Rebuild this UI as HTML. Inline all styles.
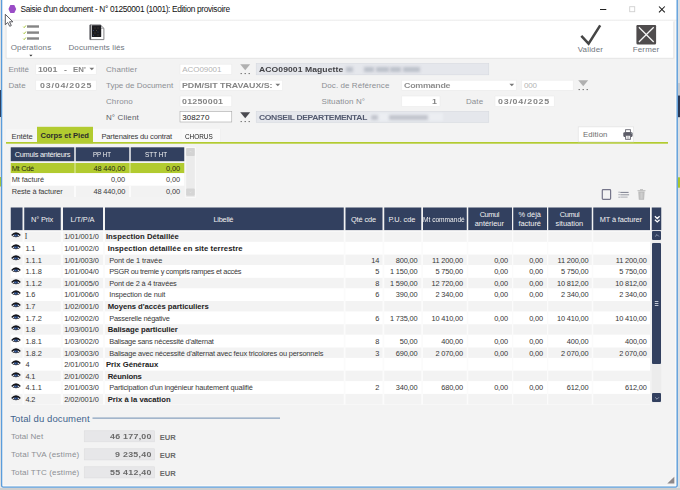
<!DOCTYPE html>
<html><head><meta charset="utf-8"><title>Saisie d'un document</title>
<style>
*{margin:0;padding:0;box-sizing:border-box}
html,body{width:680px;height:490px;overflow:hidden;background:#f3f3f3;font-family:"Liberation Sans",sans-serif}
.a{position:absolute}
.t{position:absolute;white-space:pre;line-height:12px;height:12px}
</style></head><body>
<div class="a" style="left:0px;top:0px;width:680px;height:20px;background:#fff;"></div>
<div class="a" style="left:0px;top:19px;width:680px;height:3px;background:linear-gradient(#fff,#efefef 45%,#f3f3f3);"></div>
<svg class="a" style="left:4px;top:19px" width="673" height="42"><rect x="2.100" y="1.900" width="667.700" height="37.400" fill="#fff"/><path d="M2.100 2.500 V39.300 H669.800 V2.500" fill="none" stroke="#e0e0e0" stroke-width="0.800"/></svg>
<svg class="a" style="left:8px;top:4px" width="9" height="10" viewBox="0 0 9 10"><path d="M2.300 0.900 H6.300 L8.200 4.900 L6.300 8.900 H2.300 L0.500 4.900 Z" fill="#9a4cc6"/></svg>
<svg class="a" style="left:596px;top:3px" width="72" height="12" viewBox="0 0 72 12"><path d="M4 6.500 H10.300" stroke="#222" stroke-width="1"/><rect x="33.700" y="3.700" width="5" height="5" fill="none" stroke="#cfcfcf" stroke-width="0.900"/><path d="M63 3.500 L68.800 9.300 M68.800 3.500 L63 9.300" stroke="#1a1a1a" stroke-width="1.050"/></svg>
<svg class="a" style="left:22px;top:24px" width="19" height="17" viewBox="0 0 19 17"><g fill="#858585"><rect x="5" y="1.300" width="12" height="2.400"/><rect x="5" y="7.400" width="12" height="2.400"/><rect x="5" y="13.300" width="12" height="2.400"/></g><g stroke="#9cbf1e" stroke-width="0.900" fill="none"><path d="M1.300 2.700 L2.200 3.600 L3.900 1.500"/><path d="M1.300 8.800 L2.200 9.700 L3.900 7.600"/><path d="M1.300 14.700 L2.200 15.600 L3.900 13.500"/></g></svg>
<svg class="a" style="left:29px;top:54px" width="4" height="3" viewBox="0 0 4 3"><path d="M0.300 0.800 H3.500 L1.900 2.500 Z" fill="#333"/></svg>
<svg class="a" style="left:88px;top:23px" width="18" height="18" viewBox="0 0 18 18"><path d="M2 1.900 H12.300 L15.900 5.300 V16.600 H2 Z" fill="#fff" stroke="#77777b" stroke-width="0.900"/><path d="M2.400 1.900 V16.600" stroke="#5a5a5e" stroke-width="1.500"/><path d="M12.300 1.900 V5.300 H15.900" fill="none" stroke="#8a8a8e" stroke-width="0.700"/><rect x="3.800" y="2.300" width="9.400" height="11.800" rx="0.500" fill="#1b1b1f"/><g fill="#8a7a5a"><circle cx="7" cy="5" r=".45"/><circle cx="10" cy="5" r=".45"/><circle cx="8.500" cy="7.500" r=".45"/><circle cx="7" cy="10" r=".45"/><circle cx="10" cy="12" r=".45"/></g><g fill="#4a68b0"><circle cx="5.500" cy="7.500" r=".45"/><circle cx="10" cy="9" r=".45"/><circle cx="5.500" cy="12.300" r=".45"/></g></svg>
<svg class="a" style="left:578px;top:22px" width="26" height="26" viewBox="0 0 26 26"><path d="M3.300 13.800 L10.600 21.600 L22.200 3.300" stroke="#454545" stroke-width="2.500" fill="none" stroke-linejoin="miter"/></svg>
<svg class="a" style="left:636px;top:25px" width="21" height="20" viewBox="0 0 21 20"><rect x="0.400" y="-0.200" width="19.700" height="19.700" rx="1.500" fill="#4f4c4d"/><path d="M2.900 2.300 L17.700 17 M17.700 2.300 L2.900 17" stroke="#f6f6f6" stroke-width="1.250"/></svg>
<svg class="a" style="left:34px;top:63px" width="64" height="14"><rect x="1.75" y="1.20" width="60.50" height="10.20" fill="#fff" stroke="#ececec" stroke-width="0.6"/></svg>
<svg class="a" style="left:88.6px;top:67.4px" width="6" height="4" viewBox="0 0 6 4"><path d="M0.400 0.700 H5.200 L2.800 3.300 Z" fill="#777"/></svg>
<svg class="a" style="left:179px;top:63px" width="55" height="14"><rect x="1.00" y="1.20" width="51.75" height="10.20" fill="#fff" stroke="#ececec" stroke-width="0.6"/></svg>
<svg class="a" style="left:240px;top:64.2px" width="11" height="11" viewBox="0 0 11 11"><path d="M0.200 0.300 H10.200 L5.200 6.300 Z" fill="#b0b0b0"/><path d="M0.600 9.600 H1.800 M4.600 9.600 H5.800 M8.600 9.600 H9.800" stroke="#555" stroke-width="1"/></svg>
<svg class="a" style="left:255px;top:62px" width="236" height="15"><rect x="1.25" y="1.60" width="232.50" height="11.20" fill="#e5e7ec" stroke="#d6d9e0" stroke-width="0.6"/></svg>
<svg class="a" style="left:34px;top:79px" width="64" height="14"><rect x="1.75" y="1.20" width="60.50" height="10.10" fill="#fff" stroke="#ececec" stroke-width="0.6"/></svg>
<svg class="a" style="left:179px;top:79px" width="106" height="14"><rect x="1.00" y="1.20" width="102.50" height="10.10" fill="#fff" stroke="#ececec" stroke-width="0.6"/></svg>
<svg class="a" style="left:274.5px;top:83.2px" width="6" height="4" viewBox="0 0 6 4"><path d="M0.400 0.700 H5.200 L2.800 3.300 Z" fill="#777"/></svg>
<svg class="a" style="left:400px;top:79px" width="118" height="14"><rect x="1.75" y="1.20" width="114.50" height="10.10" fill="#fff" stroke="#ececec" stroke-width="0.6"/></svg>
<svg class="a" style="left:509.29999999999995px;top:83.2px" width="6" height="4" viewBox="0 0 6 4"><path d="M0.400 0.700 H5.200 L2.800 3.300 Z" fill="#777"/></svg>
<svg class="a" style="left:520px;top:79px" width="55" height="14"><rect x="1.75" y="1.20" width="51.50" height="10.10" fill="#fff" stroke="#ececec" stroke-width="0.6"/></svg>
<svg class="a" style="left:577.5px;top:80.3px" width="11" height="11" viewBox="0 0 11 11"><path d="M0.200 0.300 H10.200 L5.200 6.300 Z" fill="#b0b0b0"/><path d="M0.600 9.600 H1.800 M4.600 9.600 H5.800 M8.600 9.600 H9.800" stroke="#555" stroke-width="1"/></svg>
<svg class="a" style="left:179px;top:95px" width="55" height="14"><rect x="1.00" y="1.00" width="51.75" height="10.50" fill="#fff" stroke="#ececec" stroke-width="0.6"/></svg>
<svg class="a" style="left:400px;top:95px" width="42" height="14"><rect x="1.75" y="1.00" width="38.25" height="10.50" fill="#fff" stroke="#ececec" stroke-width="0.6"/></svg>
<svg class="a" style="left:494px;top:95px" width="63" height="14"><rect x="1.00" y="1.00" width="59.25" height="10.50" fill="#fff" stroke="#ececec" stroke-width="0.6"/></svg>
<svg class="a" style="left:179px;top:110px" width="55" height="14"><rect x="1.00" y="1.40" width="51.75" height="10.60" fill="#fff" stroke="#a8a8a8" stroke-width="0.6"/></svg>
<svg class="a" style="left:240px;top:111.6px" width="11" height="11" viewBox="0 0 11 11"><path d="M0.200 0.300 H10.200 L5.200 6.300 Z" fill="#4a4a50"/><path d="M0.600 9.600 H1.800 M4.600 9.600 H5.800 M8.600 9.600 H9.800" stroke="#555" stroke-width="1"/></svg>
<svg class="a" style="left:255px;top:110px" width="236" height="15"><rect x="1.25" y="1.30" width="232.50" height="11.00" fill="#e5e7ec" stroke="#d6d9e0" stroke-width="0.6"/></svg>
<div class="a" style="left:369px;top:112.500px;width:74px;height:8.500px;background:#eceef2;filter:blur(1px)"></div>
<div class="a" style="left:345.5px;top:67px;width:7.0px;height:4.500px;background:#bcc0ca;filter:blur(1.400px)"></div>
<div class="a" style="left:363.7px;top:67px;width:10.0px;height:4.500px;background:#bcc0ca;filter:blur(1.400px)"></div>
<div class="a" style="left:376.2px;top:67px;width:12.5px;height:4.500px;background:#bcc0ca;filter:blur(1.400px)"></div>
<div class="a" style="left:390px;top:67px;width:11.199999999999989px;height:4.500px;background:#bcc0ca;filter:blur(1.400px)"></div>
<div class="a" style="left:402.5px;top:67px;width:17.5px;height:4.500px;background:#bcc0ca;filter:blur(1.400px)"></div>
<div class="a" style="left:371.2px;top:115px;width:7.300000000000011px;height:4.500px;background:#c0c3cc;filter:blur(1.500px)"></div>
<div class="a" style="left:389px;top:115px;width:38.5px;height:4.500px;background:#c0c3cc;filter:blur(1.500px)"></div>
<svg class="a" style="left:6px;top:128px" width="31" height="15"><rect x="0.00" y="0.70" width="31.00" height="13.50" fill="#f6f6f6"/></svg>
<svg class="a" style="left:93px;top:128px" width="127" height="15"><rect x="0.00" y="0.70" width="127.00" height="13.50" fill="#f9f9f9"/></svg>
<svg class="a" style="left:180px;top:129px" width="2" height="13"><rect x="0.70" y="0.00" width="0.60" height="13.00" fill="#f1f1f1"/></svg>
<svg class="a" style="left:220px;top:129px" width="1" height="13"><rect x="0.00" y="0.00" width="0.60" height="13.00" fill="#eeeeee"/></svg>
<svg class="a" style="left:0;top:120px" width="680" height="30" viewBox="0 0 680 30"><rect x="6" y="22" width="662" height="1.700" fill="#b2cb30"/><rect x="37" y="6.800" width="56" height="16.500" fill="#b2cb30"/></svg>
<svg class="a" style="left:577px;top:125px" width="59" height="19"><rect x="1.20" y="1.90" width="55.50" height="15.00" fill="#fff" stroke="#dedede" stroke-width="0.6"/></svg>
<svg class="a" style="left:622px;top:128px" width="12" height="13" viewBox="0 0 12 13"><rect x="3.600" y="1.700" width="4.800" height="3" fill="#fff" stroke="#66666f" stroke-width="0.900"/><rect x="1.300" y="4.300" width="9.300" height="4.600" rx="1.100" fill="#5c5c67"/><rect x="3.600" y="7.300" width="4.800" height="4" fill="#fff" stroke="#66666f" stroke-width="0.900"/><path d="M4.800 8.900 H7.200 M4.800 10.100 H7.200" stroke="#77777f" stroke-width=".5"/><circle cx="9.300" cy="5.600" r=".5" fill="#9aa"/></svg>
<svg class="a" style="left:10px;top:147px" width="65" height="15"><rect x="0.75" y="0.30" width="63.50" height="13.90" fill="#32405f"/></svg>
<svg class="a" style="left:75px;top:147px" width="55" height="15"><rect x="0.75" y="0.30" width="53.50" height="13.90" fill="#32405f"/></svg>
<svg class="a" style="left:130px;top:147px" width="55" height="15"><rect x="0.75" y="0.30" width="53.50" height="13.90" fill="#32405f"/></svg>
<svg class="a" style="left:184px;top:146px" width="14" height="54"><rect x="1.400" y="1.300" width="10.400" height="50.600" fill="#fafafa"/><rect x="2.100" y="2" width="8.800" height="49" fill="#ebebeb"/><rect x="2.100" y="2" width="8.700" height="7.900" rx="1" fill="#d3d3d3"/><rect x="2.100" y="42.400" width="8.700" height="7.400" rx="1" fill="#d5d5d5"/><path d="M5.300 6.300 L6.500 5.100 L7.700 6.300" stroke="#e6e6e6" stroke-width=".6" fill="none"/><path d="M5.300 45.600 L6.500 46.800 L7.700 45.600" stroke="#e6e6e6" stroke-width=".6" fill="none"/></svg>
<svg class="a" style="left:10px;top:163px" width="175" height="11"><rect x="0.75" y="0.00" width="173.50" height="10.20" fill="#b2cb30"/></svg>
<svg class="a" style="left:74px;top:163px" width="2" height="11"><rect x="0.30" y="0.00" width="1.40" height="10.20" fill="#d5e48a"/></svg>
<svg class="a" style="left:129px;top:163px" width="2" height="11"><rect x="0.30" y="0.00" width="1.40" height="10.20" fill="#d5e48a"/></svg>
<svg class="a" style="left:10px;top:173px" width="175" height="13"><rect x="0.75" y="0.20" width="173.50" height="12.60" fill="#fff"/></svg>
<svg class="a" style="left:10px;top:185px" width="175" height="12"><rect x="0.75" y="0.80" width="173.50" height="11.20" fill="#f2f2f2"/></svg>
<svg class="a" style="left:74px;top:185px" width="2" height="12"><rect x="0.30" y="0.80" width="1.40" height="11.20" fill="#fff"/></svg>
<svg class="a" style="left:129px;top:185px" width="2" height="12"><rect x="0.30" y="0.80" width="1.40" height="11.20" fill="#fff"/></svg>
<svg class="a" style="left:600px;top:188px" width="48" height="13" viewBox="0 0 48 13"><rect x="2.300" y="1.600" width="8.300" height="9.800" rx="0.800" fill="none" stroke="#75758a" stroke-width="1.200"/><g stroke-width="0.800"><path d="M20.300 4.400 H28.600" stroke="#5a5e72"/><path d="M20.300 6.800 H29.100" stroke="#777a88"/><path d="M20.300 9.100 H27.600" stroke="#9a9ca6"/><path d="M18.600 4.200 h1 M18.600 6.700 h1 M18.600 9.200 h1" stroke="#666a7c"/></g><g fill="#b9b9b9"><path d="M38.300 3.600 H44.600 L44.100 11.700 H38.800 Z"/><rect x="37.500" y="2.200" width="8" height="1"/><rect x="40" y="1.200" width="3" height="1"/></g><g stroke="#dcdcdc" stroke-width=".6"><path d="M40.200 4.500 V10.800 M41.500 4.500 V10.800 M42.800 4.500 V10.800"/></g></svg>
<svg class="a" style="left:10px;top:231px" width="640" height="174"><rect x="0.75" y="0.00" width="639.25" height="173.50" fill="#fff"/></svg>
<svg class="a" style="left:10px;top:231px" width="640" height="11"><rect x="0.75" y="0.40" width="639.25" height="10.41" fill="#f3f3f3"/></svg>
<svg class="a" style="left:10px;top:254px" width="640" height="12"><rect x="0.75" y="0.61" width="639.25" height="10.41" fill="#f3f3f3"/></svg>
<svg class="a" style="left:10px;top:277px" width="640" height="12"><rect x="0.75" y="0.83" width="639.25" height="10.41" fill="#f3f3f3"/></svg>
<svg class="a" style="left:10px;top:301px" width="640" height="11"><rect x="0.75" y="0.04" width="639.25" height="10.41" fill="#f3f3f3"/></svg>
<svg class="a" style="left:10px;top:324px" width="640" height="11"><rect x="0.75" y="0.26" width="639.25" height="10.41" fill="#f3f3f3"/></svg>
<svg class="a" style="left:10px;top:347px" width="640" height="11"><rect x="0.75" y="0.47" width="639.25" height="10.41" fill="#f3f3f3"/></svg>
<svg class="a" style="left:10px;top:370px" width="640" height="12"><rect x="0.75" y="0.68" width="639.25" height="10.41" fill="#f3f3f3"/></svg>
<svg class="a" style="left:10px;top:393px" width="640" height="12"><rect x="0.75" y="0.90" width="639.25" height="10.41" fill="#f3f3f3"/></svg>
<svg class="a" style="left:22px;top:231px" width="3" height="174"><rect x="0.50" y="0.00" width="1.75" height="173.50" fill="#fbfbfb"/></svg>
<svg class="a" style="left:60px;top:231px" width="3" height="174"><rect x="0.75" y="0.00" width="2.25" height="173.50" fill="#fbfbfb"/></svg>
<svg class="a" style="left:103px;top:231px" width="2" height="174"><rect x="0.00" y="0.00" width="2.00" height="173.50" fill="#fbfbfb"/></svg>
<svg class="a" style="left:343px;top:231px" width="3" height="174"><rect x="0.75" y="0.00" width="1.75" height="173.50" fill="#fbfbfb"/></svg>
<svg class="a" style="left:382px;top:231px" width="3" height="174"><rect x="0.50" y="0.00" width="1.75" height="173.50" fill="#fbfbfb"/></svg>
<svg class="a" style="left:421px;top:231px" width="2" height="174"><rect x="0.25" y="0.00" width="1.75" height="173.50" fill="#fbfbfb"/></svg>
<svg class="a" style="left:466px;top:231px" width="3" height="174"><rect x="0.75" y="0.00" width="1.50" height="173.50" fill="#fbfbfb"/></svg>
<svg class="a" style="left:512px;top:231px" width="2" height="174"><rect x="0.00" y="0.00" width="1.25" height="173.50" fill="#fbfbfb"/></svg>
<svg class="a" style="left:547px;top:231px" width="2" height="174"><rect x="0.00" y="0.00" width="1.25" height="173.50" fill="#fbfbfb"/></svg>
<svg class="a" style="left:591px;top:231px" width="3" height="174"><rect x="0.75" y="0.00" width="1.50" height="173.50" fill="#fbfbfb"/></svg>
<svg class="a" style="left:10px;top:207px" width="13" height="24"><rect x="0.75" y="0.50" width="11.75" height="22.60" fill="#32405f"/></svg>
<svg class="a" style="left:24px;top:207px" width="37" height="24"><rect x="0.25" y="0.50" width="36.50" height="22.60" fill="#32405f"/></svg>
<svg class="a" style="left:63px;top:207px" width="40" height="24"><rect x="0.00" y="0.50" width="40.00" height="22.60" fill="#32405f"/></svg>
<svg class="a" style="left:105px;top:207px" width="239" height="24"><rect x="0.00" y="0.50" width="238.75" height="22.60" fill="#32405f"/></svg>
<svg class="a" style="left:345px;top:207px" width="38" height="24"><rect x="0.50" y="0.50" width="37.00" height="22.60" fill="#32405f"/></svg>
<svg class="a" style="left:384px;top:207px" width="38" height="24"><rect x="0.25" y="0.50" width="37.00" height="22.60" fill="#32405f"/></svg>
<svg class="a" style="left:423px;top:207px" width="44" height="24"><rect x="0.00" y="0.50" width="43.75" height="22.60" fill="#32405f"/></svg>
<svg class="a" style="left:468px;top:207px" width="44" height="24"><rect x="0.25" y="0.50" width="43.75" height="22.60" fill="#32405f"/></svg>
<svg class="a" style="left:513px;top:207px" width="34" height="24"><rect x="0.25" y="0.50" width="33.75" height="22.60" fill="#32405f"/></svg>
<svg class="a" style="left:548px;top:207px" width="44" height="24"><rect x="0.25" y="0.50" width="43.50" height="22.60" fill="#32405f"/></svg>
<svg class="a" style="left:593px;top:207px" width="57" height="24"><rect x="0.25" y="0.50" width="56.75" height="22.60" fill="#32405f"/></svg>
<svg class="a" style="left:11.200px;top:232.25px" width="10" height="6" viewBox="0 0 10 6"><path d="M0.100 2.900 Q2.300 0.200 5 0.200 Q7.700 0.200 9.900 2.900 Q7.700 5.300 5 5.300 Q2.300 5.300 0.100 2.900 Z" fill="#15151a"/><path d="M1.300 3.300 Q2.600 4.600 5 4.600 Q7.400 4.600 8.700 3.300 Q7.400 2.500 5 2.500 Q2.600 2.500 1.300 3.300 Z" fill="#e9e9ee"/><ellipse cx="5" cy="3.300" rx="1.900" ry="1.500" fill="#1d2f55"/><circle cx="4.300" cy="3.400" r=".6" fill="#4f7fc4"/><circle cx="6" cy="3.500" r=".5" fill="#3e69ac"/></svg>
<svg class="a" style="left:11.200px;top:243.86px" width="10" height="6" viewBox="0 0 10 6"><path d="M0.100 2.900 Q2.300 0.200 5 0.200 Q7.700 0.200 9.900 2.900 Q7.700 5.300 5 5.300 Q2.300 5.300 0.100 2.900 Z" fill="#15151a"/><path d="M1.300 3.300 Q2.600 4.600 5 4.600 Q7.400 4.600 8.700 3.300 Q7.400 2.500 5 2.500 Q2.600 2.500 1.300 3.300 Z" fill="#e9e9ee"/><ellipse cx="5" cy="3.300" rx="1.900" ry="1.500" fill="#1d2f55"/><circle cx="4.300" cy="3.400" r=".6" fill="#4f7fc4"/><circle cx="6" cy="3.500" r=".5" fill="#3e69ac"/></svg>
<svg class="a" style="left:11.200px;top:255.46px" width="10" height="6" viewBox="0 0 10 6"><path d="M0.100 2.900 Q2.300 0.200 5 0.200 Q7.700 0.200 9.900 2.900 Q7.700 5.300 5 5.300 Q2.300 5.300 0.100 2.900 Z" fill="#15151a"/><path d="M1.300 3.300 Q2.600 4.600 5 4.600 Q7.400 4.600 8.700 3.300 Q7.400 2.500 5 2.500 Q2.600 2.500 1.300 3.300 Z" fill="#e9e9ee"/><ellipse cx="5" cy="3.300" rx="1.900" ry="1.500" fill="#1d2f55"/><circle cx="4.300" cy="3.400" r=".6" fill="#4f7fc4"/><circle cx="6" cy="3.500" r=".5" fill="#3e69ac"/></svg>
<svg class="a" style="left:11.200px;top:267.07px" width="10" height="6" viewBox="0 0 10 6"><path d="M0.100 2.900 Q2.300 0.200 5 0.200 Q7.700 0.200 9.900 2.900 Q7.700 5.300 5 5.300 Q2.300 5.300 0.100 2.900 Z" fill="#15151a"/><path d="M1.300 3.300 Q2.600 4.600 5 4.600 Q7.400 4.600 8.700 3.300 Q7.400 2.500 5 2.500 Q2.600 2.500 1.300 3.300 Z" fill="#e9e9ee"/><ellipse cx="5" cy="3.300" rx="1.900" ry="1.500" fill="#1d2f55"/><circle cx="4.300" cy="3.400" r=".6" fill="#4f7fc4"/><circle cx="6" cy="3.500" r=".5" fill="#3e69ac"/></svg>
<svg class="a" style="left:11.200px;top:278.68px" width="10" height="6" viewBox="0 0 10 6"><path d="M0.100 2.900 Q2.300 0.200 5 0.200 Q7.700 0.200 9.900 2.900 Q7.700 5.300 5 5.300 Q2.300 5.300 0.100 2.900 Z" fill="#15151a"/><path d="M1.300 3.300 Q2.600 4.600 5 4.600 Q7.400 4.600 8.700 3.300 Q7.400 2.500 5 2.500 Q2.600 2.500 1.300 3.300 Z" fill="#e9e9ee"/><ellipse cx="5" cy="3.300" rx="1.900" ry="1.500" fill="#1d2f55"/><circle cx="4.300" cy="3.400" r=".6" fill="#4f7fc4"/><circle cx="6" cy="3.500" r=".5" fill="#3e69ac"/></svg>
<svg class="a" style="left:11.200px;top:290.28px" width="10" height="6" viewBox="0 0 10 6"><path d="M0.100 2.900 Q2.300 0.200 5 0.200 Q7.700 0.200 9.900 2.900 Q7.700 5.300 5 5.300 Q2.300 5.300 0.100 2.900 Z" fill="#15151a"/><path d="M1.300 3.300 Q2.600 4.600 5 4.600 Q7.400 4.600 8.700 3.300 Q7.400 2.500 5 2.500 Q2.600 2.500 1.300 3.300 Z" fill="#e9e9ee"/><ellipse cx="5" cy="3.300" rx="1.900" ry="1.500" fill="#1d2f55"/><circle cx="4.300" cy="3.400" r=".6" fill="#4f7fc4"/><circle cx="6" cy="3.500" r=".5" fill="#3e69ac"/></svg>
<svg class="a" style="left:11.200px;top:301.89px" width="10" height="6" viewBox="0 0 10 6"><path d="M0.100 2.900 Q2.300 0.200 5 0.200 Q7.700 0.200 9.900 2.900 Q7.700 5.300 5 5.300 Q2.300 5.300 0.100 2.900 Z" fill="#15151a"/><path d="M1.300 3.300 Q2.600 4.600 5 4.600 Q7.400 4.600 8.700 3.300 Q7.400 2.500 5 2.500 Q2.600 2.500 1.300 3.300 Z" fill="#e9e9ee"/><ellipse cx="5" cy="3.300" rx="1.900" ry="1.500" fill="#1d2f55"/><circle cx="4.300" cy="3.400" r=".6" fill="#4f7fc4"/><circle cx="6" cy="3.500" r=".5" fill="#3e69ac"/></svg>
<svg class="a" style="left:11.200px;top:313.5px" width="10" height="6" viewBox="0 0 10 6"><path d="M0.100 2.900 Q2.300 0.200 5 0.200 Q7.700 0.200 9.900 2.900 Q7.700 5.300 5 5.300 Q2.300 5.300 0.100 2.900 Z" fill="#15151a"/><path d="M1.300 3.300 Q2.600 4.600 5 4.600 Q7.400 4.600 8.700 3.300 Q7.400 2.500 5 2.500 Q2.600 2.500 1.300 3.300 Z" fill="#e9e9ee"/><ellipse cx="5" cy="3.300" rx="1.900" ry="1.500" fill="#1d2f55"/><circle cx="4.300" cy="3.400" r=".6" fill="#4f7fc4"/><circle cx="6" cy="3.500" r=".5" fill="#3e69ac"/></svg>
<svg class="a" style="left:11.200px;top:325.11px" width="10" height="6" viewBox="0 0 10 6"><path d="M0.100 2.900 Q2.300 0.200 5 0.200 Q7.700 0.200 9.900 2.900 Q7.700 5.300 5 5.300 Q2.300 5.300 0.100 2.900 Z" fill="#15151a"/><path d="M1.300 3.300 Q2.600 4.600 5 4.600 Q7.400 4.600 8.700 3.300 Q7.400 2.500 5 2.500 Q2.600 2.500 1.300 3.300 Z" fill="#e9e9ee"/><ellipse cx="5" cy="3.300" rx="1.900" ry="1.500" fill="#1d2f55"/><circle cx="4.300" cy="3.400" r=".6" fill="#4f7fc4"/><circle cx="6" cy="3.500" r=".5" fill="#3e69ac"/></svg>
<svg class="a" style="left:11.200px;top:336.71px" width="10" height="6" viewBox="0 0 10 6"><path d="M0.100 2.900 Q2.300 0.200 5 0.200 Q7.700 0.200 9.900 2.900 Q7.700 5.300 5 5.300 Q2.300 5.300 0.100 2.900 Z" fill="#15151a"/><path d="M1.300 3.300 Q2.600 4.600 5 4.600 Q7.400 4.600 8.700 3.300 Q7.400 2.500 5 2.500 Q2.600 2.500 1.300 3.300 Z" fill="#e9e9ee"/><ellipse cx="5" cy="3.300" rx="1.900" ry="1.500" fill="#1d2f55"/><circle cx="4.300" cy="3.400" r=".6" fill="#4f7fc4"/><circle cx="6" cy="3.500" r=".5" fill="#3e69ac"/></svg>
<svg class="a" style="left:11.200px;top:348.32px" width="10" height="6" viewBox="0 0 10 6"><path d="M0.100 2.900 Q2.300 0.200 5 0.200 Q7.700 0.200 9.900 2.900 Q7.700 5.300 5 5.300 Q2.300 5.300 0.100 2.900 Z" fill="#15151a"/><path d="M1.300 3.300 Q2.600 4.600 5 4.600 Q7.400 4.600 8.700 3.300 Q7.400 2.500 5 2.500 Q2.600 2.500 1.300 3.300 Z" fill="#e9e9ee"/><ellipse cx="5" cy="3.300" rx="1.900" ry="1.500" fill="#1d2f55"/><circle cx="4.300" cy="3.400" r=".6" fill="#4f7fc4"/><circle cx="6" cy="3.500" r=".5" fill="#3e69ac"/></svg>
<svg class="a" style="left:11.200px;top:359.93px" width="10" height="6" viewBox="0 0 10 6"><path d="M0.100 2.900 Q2.300 0.200 5 0.200 Q7.700 0.200 9.900 2.900 Q7.700 5.300 5 5.300 Q2.300 5.300 0.100 2.900 Z" fill="#15151a"/><path d="M1.300 3.300 Q2.600 4.600 5 4.600 Q7.400 4.600 8.700 3.300 Q7.400 2.500 5 2.500 Q2.600 2.500 1.300 3.300 Z" fill="#e9e9ee"/><ellipse cx="5" cy="3.300" rx="1.900" ry="1.500" fill="#1d2f55"/><circle cx="4.300" cy="3.400" r=".6" fill="#4f7fc4"/><circle cx="6" cy="3.500" r=".5" fill="#3e69ac"/></svg>
<svg class="a" style="left:11.200px;top:371.53px" width="10" height="6" viewBox="0 0 10 6"><path d="M0.100 2.900 Q2.300 0.200 5 0.200 Q7.700 0.200 9.900 2.900 Q7.700 5.300 5 5.300 Q2.300 5.300 0.100 2.900 Z" fill="#15151a"/><path d="M1.300 3.300 Q2.600 4.600 5 4.600 Q7.400 4.600 8.700 3.300 Q7.400 2.500 5 2.500 Q2.600 2.500 1.300 3.300 Z" fill="#e9e9ee"/><ellipse cx="5" cy="3.300" rx="1.900" ry="1.500" fill="#1d2f55"/><circle cx="4.300" cy="3.400" r=".6" fill="#4f7fc4"/><circle cx="6" cy="3.500" r=".5" fill="#3e69ac"/></svg>
<svg class="a" style="left:11.200px;top:383.14px" width="10" height="6" viewBox="0 0 10 6"><path d="M0.100 2.900 Q2.300 0.200 5 0.200 Q7.700 0.200 9.900 2.900 Q7.700 5.300 5 5.300 Q2.300 5.300 0.100 2.900 Z" fill="#15151a"/><path d="M1.300 3.300 Q2.600 4.600 5 4.600 Q7.400 4.600 8.700 3.300 Q7.400 2.500 5 2.500 Q2.600 2.500 1.300 3.300 Z" fill="#e9e9ee"/><ellipse cx="5" cy="3.300" rx="1.900" ry="1.500" fill="#1d2f55"/><circle cx="4.300" cy="3.400" r=".6" fill="#4f7fc4"/><circle cx="6" cy="3.500" r=".5" fill="#3e69ac"/></svg>
<svg class="a" style="left:11.200px;top:394.75px" width="10" height="6" viewBox="0 0 10 6"><path d="M0.100 2.900 Q2.300 0.200 5 0.200 Q7.700 0.200 9.900 2.900 Q7.700 5.300 5 5.300 Q2.300 5.300 0.100 2.900 Z" fill="#15151a"/><path d="M1.300 3.300 Q2.600 4.600 5 4.600 Q7.400 4.600 8.700 3.300 Q7.400 2.500 5 2.500 Q2.600 2.500 1.300 3.300 Z" fill="#e9e9ee"/><ellipse cx="5" cy="3.300" rx="1.900" ry="1.500" fill="#1d2f55"/><circle cx="4.300" cy="3.400" r=".6" fill="#4f7fc4"/><circle cx="6" cy="3.500" r=".5" fill="#3e69ac"/></svg>
<svg class="a" style="left:651px;top:207px" width="11" height="24"><rect x="0.75" y="0.50" width="9.50" height="22.60" fill="#32405f"/></svg>
<svg class="a" style="left:653.500px;top:214.500px" width="7" height="9" viewBox="0 0 7 9"><path d="M0.900 1.300 L3.250 3.500 L5.600 1.300 M0.900 4.700 L3.250 6.900 L5.600 4.700" stroke="#fff" stroke-width="1.300" fill="none"/></svg>
<svg class="a" style="left:651px;top:231px" width="11" height="172"><rect x="0.75" y="0.00" width="9.50" height="172.00" fill="#ececec"/></svg>
<div class="a" style="left:651.750px;top:231.200px;width:9.500px;height:9px;background:#32405f;border-radius:1px"></div>
<div class="a" style="left:651.750px;top:242.500px;width:9.500px;height:121.500px;background:#32405f;border-radius:1px"></div>
<div class="a" style="left:651.750px;top:393.200px;width:9.500px;height:9px;background:#32405f;border-radius:1px"></div>
<svg class="a" style="left:653.500px;top:233px" width="6" height="5" viewBox="0 0 6 5"><path d="M1.200 3.400 L3 1.600 L4.800 3.400" stroke="#aeb8cc" stroke-width=".8" fill="none"/></svg>
<svg class="a" style="left:653.500px;top:395.500px" width="6" height="5" viewBox="0 0 6 5"><path d="M1.200 1.400 L3 3.200 L4.800 1.400" stroke="#aeb8cc" stroke-width=".8" fill="none"/></svg>
<svg class="a" style="left:654px;top:301px" width="5" height="1"><rect x="0.80" y="0.00" width="3.60" height="0.80" fill="#e4e8f0"/></svg>
<svg class="a" style="left:654px;top:303px" width="5" height="1"><rect x="0.80" y="0.00" width="3.60" height="0.80" fill="#e4e8f0"/></svg>
<svg class="a" style="left:654px;top:305px" width="5" height="1"><rect x="0.80" y="0.00" width="3.60" height="0.80" fill="#e4e8f0"/></svg>
<svg class="a" style="left:90px;top:416px" width="192" height="4" viewBox="0 0 192 4"><rect x="2.500" y="1.600" width="187.500" height="1" fill="#6f8eb2"/></svg>
<svg class="a" style="left:83px;top:429px" width="74" height="15"><rect x="1.25" y="1.80" width="70.25" height="11.00" fill="#e7e7e9" stroke="#dcdcde" stroke-width="0.6"/></svg>
<svg class="a" style="left:83px;top:447px" width="74" height="15"><rect x="1.25" y="1.80" width="70.25" height="11.10" fill="#e7e7e9" stroke="#dcdcde" stroke-width="0.6"/></svg>
<svg class="a" style="left:83px;top:465px" width="74" height="15"><rect x="1.25" y="1.80" width="70.25" height="11.10" fill="#e7e7e9" stroke="#dcdcde" stroke-width="0.6"/></svg>
<svg class="a" style="left:665px;top:475px" width="11" height="11" viewBox="0 0 11 11"><path d="M9.300 1.700 V8.500 H2.300 Z" fill="#8d898b"/></svg>
<svg class="a" style="left:0;top:0" width="680" height="490" viewBox="0 0 680 490">
<rect x="0" y="0" width="1" height="490" fill="#ece6e0"/>
<rect x="0" y="90" width="1.200" height="27" fill="#2a3855"/>
<rect x="0" y="177" width="1.200" height="9.500" fill="#a9c42c"/>
<rect x="677.900" y="0" width="2.100" height="490" fill="#dcdfe3"/>
<rect x="678" y="83" width="2" height="12.500" fill="#c4c8cf"/>
<rect x="678" y="95.500" width="2" height="21.700" fill="#2a3855"/>
<rect x="678" y="177.300" width="2" height="10.400" fill="#a9c42c"/>
<rect x="0" y="488" width="680" height="2" fill="#cfcfcf"/>
<path d="M2.800 21 V485.800 H675.800 V21" fill="none" stroke="#fbfbfb" stroke-width="1"/>
<path d="M1.600 0 V485.500 Q1.600 487.100 3.200 487.100 H675.600 Q677.200 487.100 677.200 485.500 V0" fill="none" stroke="#5b9ddb" stroke-width="1.400"/>
</svg>
<svg class="a" style="left:4px;top:13px" width="11" height="15" viewBox="0 0 11 15"><path d="M1.300 1.300 V11.700 L3.700 9.500 L5.700 13.300 L7.300 12.500 L5.500 8.800 H8.900 Z" fill="#fff" stroke="#4a4a50" stroke-width="0.900" stroke-linejoin="round"/></svg>
<div class="t" style="left:20.60px;top:3px;font-size:8.3px;color:#111;letter-spacing:-0.335px;">Saisie d'un document - N° 01250001 (1001): Edition provisoire</div>
<div class="t" style="left:10.70px;top:42px;font-size:8.0px;color:#70767e;letter-spacing:0.156px;">Opérations</div>
<div class="t" style="left:68.45px;top:42px;font-size:8.0px;color:#70767e;letter-spacing:0.112px;">Documents liés</div>
<div class="t" style="left:577.70px;top:44px;font-size:8.0px;color:#70767e;letter-spacing:0.170px;">Valider</div>
<div class="t" style="left:632.70px;top:44px;font-size:8.0px;color:#70767e;letter-spacing:0.161px;">Fermer</div>
<div class="t" style="left:8.45px;top:64px;font-size:8.0px;color:#8c8f94;letter-spacing:0.005px;">Entité</div>
<div class="t" style="left:38.45px;top:64px;font-size:7.5px;color:#848484;font-weight:bold;letter-spacing:-0.093px;transform:scaleX(1.1800);transform-origin:0 50%;">1001</div>
<div class="t" style="left:64.30px;top:64px;font-size:7.5px;color:#848484;font-weight:bold;transform:scaleX(1.1800);transform-origin:0 50%;">-</div>
<div class="t" style="left:73.20px;top:64px;font-size:7.5px;color:#848484;font-weight:bold;transform:scaleX(1.0448);transform-origin:0 50%;">EN'</div>
<div class="t" style="left:105.95px;top:64px;font-size:8.0px;color:#8c8f94;letter-spacing:0.125px;">Chantier</div>
<div class="t" style="left:182.20px;top:64px;font-size:8.0px;color:#b4b4b4;letter-spacing:-0.043px;">ACO09001</div>
<div class="t" style="left:258.95px;top:64px;font-size:7.8px;color:#424246;font-weight:bold;letter-spacing:0.070px;transform:scaleX(1.1000);transform-origin:0 50%;">ACO09001 Maguette</div>
<div class="t" style="left:8.45px;top:80px;font-size:8.0px;color:#8c8f94;letter-spacing:0.086px;">Date</div>
<div class="t" style="left:40.45px;top:80px;font-size:7.5px;color:#848484;font-weight:bold;letter-spacing:0.673px;transform:scaleX(1.1800);transform-origin:0 50%;">03/04/2025</div>
<div class="t" style="left:105.95px;top:80px;font-size:8.0px;color:#8c8f94;letter-spacing:0.006px;">Type de Document</div>
<div class="t" style="left:182.20px;top:80px;font-size:7.5px;color:#848484;font-weight:bold;letter-spacing:-0.030px;transform:scaleX(1.1800);transform-origin:0 50%;">PDM/SIT TRAVAUX/S:</div>
<div class="t" style="left:321.45px;top:80px;font-size:8.0px;color:#8c8f94;letter-spacing:0.076px;">Doc. de Référence</div>
<div class="t" style="left:403.95px;top:80px;font-size:7.5px;color:#8e8e8e;font-weight:bold;letter-spacing:-0.206px;transform:scaleX(1.1800);transform-origin:0 50%;">Commande</div>
<div class="t" style="left:523.95px;top:80px;font-size:8.0px;color:#b4b4b4;letter-spacing:-0.120px;">000</div>
<div class="t" style="left:105.95px;top:96px;font-size:8.0px;color:#8c8f94;letter-spacing:0.125px;">Chrono</div>
<div class="t" style="left:182.20px;top:96px;font-size:7.5px;color:#848484;font-weight:bold;letter-spacing:0.198px;transform:scaleX(1.1800);transform-origin:0 50%;">01250001</div>
<div class="t" style="left:321.45px;top:96px;font-size:8.0px;color:#8c8f94;letter-spacing:0.117px;">Situation N°</div>
<div class="t" style="left:432.20px;top:96px;font-size:7.5px;color:#848484;font-weight:bold;transform:scaleX(1.1800);transform-origin:0 50%;">1</div>
<div class="t" style="left:465.95px;top:96px;font-size:8.0px;color:#8c8f94;letter-spacing:0.086px;">Date</div>
<div class="t" style="left:498.20px;top:96px;font-size:7.5px;color:#848484;font-weight:bold;letter-spacing:0.652px;transform:scaleX(1.1800);transform-origin:0 50%;">03/04/2025</div>
<div class="t" style="left:105.95px;top:112px;font-size:8.0px;color:#5c6066;letter-spacing:0.149px;">N° Client</div>
<div class="t" style="left:182.20px;top:112px;font-size:8.0px;color:#222;letter-spacing:0.091px;">308270</div>
<div class="t" style="left:258.95px;top:112px;font-size:7.8px;color:#535a70;font-weight:bold;letter-spacing:-0.337px;transform:scaleX(1.1000);transform-origin:0 50%;">CONSEIL DEPARTEMENTAL</div>
<div class="t" style="left:11.45px;top:131px;font-size:7.6px;color:#3a3a3a;letter-spacing:-0.120px;">Entête</div>
<div class="t" style="left:40.45px;top:130px;font-size:7.6px;color:#2c2c2c;font-weight:bold;letter-spacing:-0.035px;">Corps et Pied</div>
<div class="t" style="left:101.45px;top:131px;font-size:7.6px;color:#3a3a3a;letter-spacing:-0.192px;">Partenaires du contrat</div>
<div class="t" style="left:185.45px;top:131px;font-size:7.7px;color:#1c1c1c;transform:scaleX(0.8326);transform-origin:0 50%;">CHORUS</div>
<div class="t" style="left:583.10px;top:129px;font-size:7.8px;color:#6c6c6c;letter-spacing:0.079px;">Edition</div>
<div class="t" style="left:14.70px;top:149px;font-size:7.4px;color:#f4f4f4;letter-spacing:-0.264px;">Cumuls antérieurs</div>
<div class="t" style="left:92.70px;top:149px;font-size:7.4px;color:#f4f4f4;transform:scaleX(0.8318);transform-origin:0 50%;">PP HT</div>
<div class="t" style="left:145.45px;top:149px;font-size:7.4px;color:#f4f4f4;transform:scaleX(0.8646);transform-origin:0 50%;">STT HT</div>
<div class="t" style="left:11.70px;top:163px;font-size:7.4px;color:#262a10;letter-spacing:-0.263px;">Mt Cdé</div>
<div class="t" style="left:93.45px;top:163px;font-size:7.4px;color:#262a10;letter-spacing:-0.127px;">48 440,00</div>
<div class="t" style="left:165.95px;top:163px;font-size:7.4px;color:#262a10;letter-spacing:-0.035px;">0,00</div>
<div class="t" style="left:11.70px;top:174px;font-size:7.4px;color:#3a3a3a;letter-spacing:-0.061px;">Mt facturé</div>
<div class="t" style="left:110.95px;top:174px;font-size:7.4px;color:#3a3a3a;letter-spacing:-0.035px;">0,00</div>
<div class="t" style="left:165.95px;top:174px;font-size:7.4px;color:#3a3a3a;letter-spacing:-0.035px;">0,00</div>
<div class="t" style="left:11.70px;top:186px;font-size:7.4px;color:#3a3a3a;letter-spacing:-0.100px;">Reste à facturer</div>
<div class="t" style="left:93.45px;top:186px;font-size:7.4px;color:#3a3a3a;letter-spacing:-0.127px;">48 440,00</div>
<div class="t" style="left:165.95px;top:186px;font-size:7.4px;color:#3a3a3a;letter-spacing:-0.035px;">0,00</div>
<div class="t" style="left:30.95px;top:214px;font-size:7.4px;color:#f2f2f2;letter-spacing:-0.118px;">N° Prix</div>
<div class="t" style="left:70.45px;top:214px;font-size:7.4px;color:#f2f2f2;letter-spacing:-0.094px;">L/T/P/A</div>
<div class="t" style="left:213.45px;top:214px;font-size:7.4px;color:#f2f2f2;letter-spacing:-0.232px;">Libellé</div>
<div class="t" style="left:350.95px;top:214px;font-size:7.4px;color:#f2f2f2;letter-spacing:-0.127px;">Qté cde</div>
<div class="t" style="left:388.45px;top:214px;font-size:7.4px;color:#f2f2f2;letter-spacing:-0.080px;">P.U. cde</div>
<div class="t" style="left:423.45px;top:214px;font-size:7.4px;color:#f2f2f2;transform:scaleX(0.8916);transform-origin:0 50%;">Mt commandé</div>
<div class="t" style="left:479.70px;top:209px;font-size:7.4px;color:#f2f2f2;letter-spacing:-0.422px;">Cumul</div>
<div class="t" style="left:474.70px;top:218px;font-size:7.4px;color:#f2f2f2;letter-spacing:0.009px;">antérieur</div>
<div class="t" style="left:518.45px;top:209px;font-size:7.4px;color:#f2f2f2;letter-spacing:-0.018px;">% déjà</div>
<div class="t" style="left:518.45px;top:218px;font-size:7.4px;color:#f2f2f2;letter-spacing:-0.016px;">facturé</div>
<div class="t" style="left:559.70px;top:209px;font-size:7.4px;color:#f2f2f2;letter-spacing:-0.322px;">Cumul</div>
<div class="t" style="left:555.45px;top:218px;font-size:7.4px;color:#f2f2f2;letter-spacing:0.024px;">situation</div>
<div class="t" style="left:599.70px;top:214px;font-size:7.4px;color:#f2f2f2;letter-spacing:-0.120px;">MT à facturer</div>
<div class="t" style="left:24.70px;top:231px;font-size:7.6px;color:#383838;font-family:'Liberation Serif',serif;">I</div>
<div class="t" style="left:64.20px;top:231px;font-size:7.4px;color:#383838;letter-spacing:-0.019px;">1/01/001/0</div>
<div class="t" style="left:105.95px;top:231px;font-size:7.7px;color:#222;font-weight:bold;letter-spacing:0.040px;">Inspection Détaillée</div>
<div class="t" style="left:25.45px;top:243px;font-size:7.4px;color:#383838;letter-spacing:-0.177px;">1.1</div>
<div class="t" style="left:64.20px;top:243px;font-size:7.4px;color:#383838;letter-spacing:-0.019px;">1/01/002/0</div>
<div class="t" style="left:107.70px;top:243px;font-size:7.7px;color:#222;font-weight:bold;letter-spacing:0.101px;">Inspection détaillée en site terrestre</div>
<div class="t" style="left:25.45px;top:255px;font-size:7.4px;color:#383838;letter-spacing:0.009px;">1.1.1</div>
<div class="t" style="left:64.20px;top:255px;font-size:7.4px;color:#383838;letter-spacing:-0.019px;">1/01/003/0</div>
<div class="t" style="left:109.20px;top:255px;font-size:7.4px;color:#383838;letter-spacing:-0.078px;">Pont de 1 travée</div>
<div class="t" style="left:371.25px;top:255px;font-size:7.4px;color:#383838;letter-spacing:-0.163px;">14</div>
<div class="t" style="left:395.78px;top:255px;font-size:7.4px;color:#383838;letter-spacing:-0.163px;">800,00</div>
<div class="t" style="left:432.03px;top:255px;font-size:7.4px;color:#383838;letter-spacing:-0.163px;">11 200,00</div>
<div class="t" style="left:494.17px;top:255px;font-size:7.4px;color:#383838;letter-spacing:-0.163px;">0,00</div>
<div class="t" style="left:529.17px;top:255px;font-size:7.4px;color:#383838;letter-spacing:-0.163px;">0,00</div>
<div class="t" style="left:557.53px;top:255px;font-size:7.4px;color:#383838;letter-spacing:-0.163px;">11 200,00</div>
<div class="t" style="left:615.78px;top:255px;font-size:7.4px;color:#383838;letter-spacing:-0.163px;">11 200,00</div>
<div class="t" style="left:25.45px;top:266px;font-size:7.4px;color:#383838;letter-spacing:0.009px;">1.1.8</div>
<div class="t" style="left:64.20px;top:266px;font-size:7.4px;color:#383838;letter-spacing:-0.019px;">1/01/004/0</div>
<div class="t" style="left:109.20px;top:266px;font-size:7.4px;color:#383838;letter-spacing:-0.294px;">PSGR ou tremie y compris rampes et accès</div>
<div class="t" style="left:375.20px;top:266px;font-size:7.4px;color:#383838;letter-spacing:-0.163px;">5</div>
<div class="t" style="left:389.93px;top:266px;font-size:7.4px;color:#383838;letter-spacing:-0.163px;">1 150,00</div>
<div class="t" style="left:435.43px;top:266px;font-size:7.4px;color:#383838;letter-spacing:-0.163px;">5 750,00</div>
<div class="t" style="left:494.17px;top:266px;font-size:7.4px;color:#383838;letter-spacing:-0.163px;">0,00</div>
<div class="t" style="left:529.17px;top:266px;font-size:7.4px;color:#383838;letter-spacing:-0.163px;">0,00</div>
<div class="t" style="left:560.93px;top:266px;font-size:7.4px;color:#383838;letter-spacing:-0.163px;">5 750,00</div>
<div class="t" style="left:619.18px;top:266px;font-size:7.4px;color:#383838;letter-spacing:-0.163px;">5 750,00</div>
<div class="t" style="left:25.45px;top:278px;font-size:7.4px;color:#383838;letter-spacing:0.009px;">1.1.2</div>
<div class="t" style="left:64.20px;top:278px;font-size:7.4px;color:#383838;letter-spacing:-0.019px;">1/01/005/0</div>
<div class="t" style="left:109.20px;top:278px;font-size:7.4px;color:#383838;letter-spacing:-0.132px;">Pont de 2 à 4 travées</div>
<div class="t" style="left:375.20px;top:278px;font-size:7.4px;color:#383838;letter-spacing:-0.163px;">8</div>
<div class="t" style="left:389.93px;top:278px;font-size:7.4px;color:#383838;letter-spacing:-0.163px;">1 590,00</div>
<div class="t" style="left:431.49px;top:278px;font-size:7.4px;color:#383838;letter-spacing:-0.163px;">12 720,00</div>
<div class="t" style="left:494.17px;top:278px;font-size:7.4px;color:#383838;letter-spacing:-0.163px;">0,00</div>
<div class="t" style="left:529.17px;top:278px;font-size:7.4px;color:#383838;letter-spacing:-0.163px;">0,00</div>
<div class="t" style="left:556.99px;top:278px;font-size:7.4px;color:#383838;letter-spacing:-0.163px;">10 812,00</div>
<div class="t" style="left:615.24px;top:278px;font-size:7.4px;color:#383838;letter-spacing:-0.163px;">10 812,00</div>
<div class="t" style="left:25.45px;top:289px;font-size:7.4px;color:#383838;letter-spacing:-0.177px;">1.6</div>
<div class="t" style="left:64.20px;top:289px;font-size:7.4px;color:#383838;letter-spacing:-0.019px;">1/01/006/0</div>
<div class="t" style="left:109.20px;top:289px;font-size:7.4px;color:#383838;letter-spacing:-0.108px;">Inspection de nuit</div>
<div class="t" style="left:375.20px;top:289px;font-size:7.4px;color:#383838;letter-spacing:-0.163px;">6</div>
<div class="t" style="left:395.78px;top:289px;font-size:7.4px;color:#383838;letter-spacing:-0.163px;">390,00</div>
<div class="t" style="left:435.43px;top:289px;font-size:7.4px;color:#383838;letter-spacing:-0.163px;">2 340,00</div>
<div class="t" style="left:494.17px;top:289px;font-size:7.4px;color:#383838;letter-spacing:-0.163px;">0,00</div>
<div class="t" style="left:529.17px;top:289px;font-size:7.4px;color:#383838;letter-spacing:-0.163px;">0,00</div>
<div class="t" style="left:560.93px;top:289px;font-size:7.4px;color:#383838;letter-spacing:-0.163px;">2 340,00</div>
<div class="t" style="left:619.18px;top:289px;font-size:7.4px;color:#383838;letter-spacing:-0.163px;">2 340,00</div>
<div class="t" style="left:25.45px;top:301px;font-size:7.4px;color:#383838;letter-spacing:-0.177px;">1.7</div>
<div class="t" style="left:64.20px;top:301px;font-size:7.4px;color:#383838;letter-spacing:-0.019px;">1/02/001/0</div>
<div class="t" style="left:107.70px;top:301px;font-size:7.7px;color:#222;font-weight:bold;letter-spacing:-0.046px;">Moyens d'accès particuliers</div>
<div class="t" style="left:25.45px;top:313px;font-size:7.4px;color:#383838;letter-spacing:0.009px;">1.7.2</div>
<div class="t" style="left:64.20px;top:313px;font-size:7.4px;color:#383838;letter-spacing:-0.019px;">1/02/002/0</div>
<div class="t" style="left:109.20px;top:313px;font-size:7.4px;color:#383838;letter-spacing:-0.211px;">Passerelle négative</div>
<div class="t" style="left:375.20px;top:313px;font-size:7.4px;color:#383838;letter-spacing:-0.163px;">6</div>
<div class="t" style="left:389.93px;top:313px;font-size:7.4px;color:#383838;letter-spacing:-0.163px;">1 735,00</div>
<div class="t" style="left:431.49px;top:313px;font-size:7.4px;color:#383838;letter-spacing:-0.163px;">10 410,00</div>
<div class="t" style="left:494.17px;top:313px;font-size:7.4px;color:#383838;letter-spacing:-0.163px;">0,00</div>
<div class="t" style="left:529.17px;top:313px;font-size:7.4px;color:#383838;letter-spacing:-0.163px;">0,00</div>
<div class="t" style="left:556.99px;top:313px;font-size:7.4px;color:#383838;letter-spacing:-0.163px;">10 410,00</div>
<div class="t" style="left:615.24px;top:313px;font-size:7.4px;color:#383838;letter-spacing:-0.163px;">10 410,00</div>
<div class="t" style="left:25.45px;top:324px;font-size:7.4px;color:#383838;letter-spacing:-0.177px;">1.8</div>
<div class="t" style="left:64.20px;top:324px;font-size:7.4px;color:#383838;letter-spacing:-0.019px;">1/03/001/0</div>
<div class="t" style="left:107.70px;top:324px;font-size:7.7px;color:#222;font-weight:bold;letter-spacing:-0.047px;">Balisage particulier</div>
<div class="t" style="left:25.45px;top:336px;font-size:7.4px;color:#383838;letter-spacing:0.009px;">1.8.1</div>
<div class="t" style="left:64.20px;top:336px;font-size:7.4px;color:#383838;letter-spacing:-0.019px;">1/03/002/0</div>
<div class="t" style="left:109.20px;top:336px;font-size:7.4px;color:#383838;letter-spacing:-0.207px;">Balisage sans nécessité d'alternat</div>
<div class="t" style="left:375.20px;top:336px;font-size:7.4px;color:#383838;letter-spacing:-0.163px;">8</div>
<div class="t" style="left:399.73px;top:336px;font-size:7.4px;color:#383838;letter-spacing:-0.163px;">50,00</div>
<div class="t" style="left:441.28px;top:336px;font-size:7.4px;color:#383838;letter-spacing:-0.163px;">400,00</div>
<div class="t" style="left:494.17px;top:336px;font-size:7.4px;color:#383838;letter-spacing:-0.163px;">0,00</div>
<div class="t" style="left:529.17px;top:336px;font-size:7.4px;color:#383838;letter-spacing:-0.163px;">0,00</div>
<div class="t" style="left:566.78px;top:336px;font-size:7.4px;color:#383838;letter-spacing:-0.163px;">400,00</div>
<div class="t" style="left:625.03px;top:336px;font-size:7.4px;color:#383838;letter-spacing:-0.163px;">400,00</div>
<div class="t" style="left:25.45px;top:348px;font-size:7.4px;color:#383838;letter-spacing:0.009px;">1.8.2</div>
<div class="t" style="left:64.20px;top:348px;font-size:7.4px;color:#383838;letter-spacing:-0.019px;">1/03/003/0</div>
<div class="t" style="left:109.20px;top:348px;font-size:7.4px;color:#383838;letter-spacing:-0.170px;">Balisage avec nécessité d'alternat avec feux tricolores ou personnels</div>
<div class="t" style="left:375.20px;top:348px;font-size:7.4px;color:#383838;letter-spacing:-0.163px;">3</div>
<div class="t" style="left:395.78px;top:348px;font-size:7.4px;color:#383838;letter-spacing:-0.163px;">690,00</div>
<div class="t" style="left:435.43px;top:348px;font-size:7.4px;color:#383838;letter-spacing:-0.163px;">2 070,00</div>
<div class="t" style="left:494.17px;top:348px;font-size:7.4px;color:#383838;letter-spacing:-0.163px;">0,00</div>
<div class="t" style="left:529.17px;top:348px;font-size:7.4px;color:#383838;letter-spacing:-0.163px;">0,00</div>
<div class="t" style="left:560.93px;top:348px;font-size:7.4px;color:#383838;letter-spacing:-0.163px;">2 070,00</div>
<div class="t" style="left:619.18px;top:348px;font-size:7.4px;color:#383838;letter-spacing:-0.163px;">2 070,00</div>
<div class="t" style="left:25.45px;top:359px;font-size:7.4px;color:#383838;">4</div>
<div class="t" style="left:64.20px;top:359px;font-size:7.4px;color:#383838;letter-spacing:-0.019px;">2/01/001/0</div>
<div class="t" style="left:105.95px;top:359px;font-size:7.7px;color:#222;font-weight:bold;letter-spacing:0.008px;">Prix Généraux</div>
<div class="t" style="left:25.45px;top:371px;font-size:7.4px;color:#383838;letter-spacing:-0.177px;">4.1</div>
<div class="t" style="left:64.20px;top:371px;font-size:7.4px;color:#383838;letter-spacing:-0.019px;">2/01/002/0</div>
<div class="t" style="left:107.70px;top:371px;font-size:7.7px;color:#222;font-weight:bold;letter-spacing:-0.129px;">Réunions</div>
<div class="t" style="left:25.45px;top:382px;font-size:7.4px;color:#383838;letter-spacing:0.009px;">4.1.1</div>
<div class="t" style="left:64.20px;top:382px;font-size:7.4px;color:#383838;letter-spacing:-0.019px;">2/01/003/0</div>
<div class="t" style="left:109.20px;top:382px;font-size:7.4px;color:#383838;letter-spacing:-0.168px;">Participation d'un ingénieur hautement qualifié</div>
<div class="t" style="left:375.20px;top:382px;font-size:7.4px;color:#383838;letter-spacing:-0.163px;">2</div>
<div class="t" style="left:395.78px;top:382px;font-size:7.4px;color:#383838;letter-spacing:-0.163px;">340,00</div>
<div class="t" style="left:441.28px;top:382px;font-size:7.4px;color:#383838;letter-spacing:-0.163px;">680,00</div>
<div class="t" style="left:494.17px;top:382px;font-size:7.4px;color:#383838;letter-spacing:-0.163px;">0,00</div>
<div class="t" style="left:529.17px;top:382px;font-size:7.4px;color:#383838;letter-spacing:-0.163px;">0,00</div>
<div class="t" style="left:566.78px;top:382px;font-size:7.4px;color:#383838;letter-spacing:-0.163px;">612,00</div>
<div class="t" style="left:625.03px;top:382px;font-size:7.4px;color:#383838;letter-spacing:-0.163px;">612,00</div>
<div class="t" style="left:25.45px;top:394px;font-size:7.4px;color:#383838;letter-spacing:-0.177px;">4.2</div>
<div class="t" style="left:64.20px;top:394px;font-size:7.4px;color:#383838;letter-spacing:-0.019px;">2/02/001/0</div>
<div class="t" style="left:107.70px;top:394px;font-size:7.7px;color:#222;font-weight:bold;letter-spacing:0.010px;">Prix à la vacation</div>
<div class="t" style="left:10.20px;top:413px;font-size:9.5px;color:#41638d;letter-spacing:0.109px;">Total du document</div>
<div class="t" style="left:10.95px;top:431px;font-size:8.0px;color:#8c8f94;letter-spacing:0.075px;">Total Net</div>
<div class="t" style="left:109.70px;top:431px;font-size:7.5px;color:#6a6a6a;font-weight:bold;letter-spacing:0.223px;transform:scaleX(1.1800);transform-origin:0 50%;">46 177,00</div>
<div class="t" style="left:159.70px;top:432px;font-size:7.6px;color:#6a6a6a;font-weight:bold;letter-spacing:0.068px;">EUR</div>
<div class="t" style="left:10.95px;top:449px;font-size:8.0px;color:#8c8f94;letter-spacing:0.215px;">Total TVA (estimé)</div>
<div class="t" style="left:114.70px;top:449px;font-size:7.5px;color:#6a6a6a;font-weight:bold;letter-spacing:0.243px;transform:scaleX(1.1800);transform-origin:0 50%;">9 235,40</div>
<div class="t" style="left:159.70px;top:450px;font-size:7.6px;color:#6a6a6a;font-weight:bold;letter-spacing:0.068px;">EUR</div>
<div class="t" style="left:10.95px;top:467px;font-size:8.0px;color:#8c8f94;letter-spacing:0.159px;">Total TTC (estimé)</div>
<div class="t" style="left:109.70px;top:467px;font-size:7.5px;color:#6a6a6a;font-weight:bold;letter-spacing:0.223px;transform:scaleX(1.1800);transform-origin:0 50%;">55 412,40</div>
<div class="t" style="left:159.70px;top:468px;font-size:7.6px;color:#6a6a6a;font-weight:bold;letter-spacing:0.068px;">EUR</div>
</body></html>
